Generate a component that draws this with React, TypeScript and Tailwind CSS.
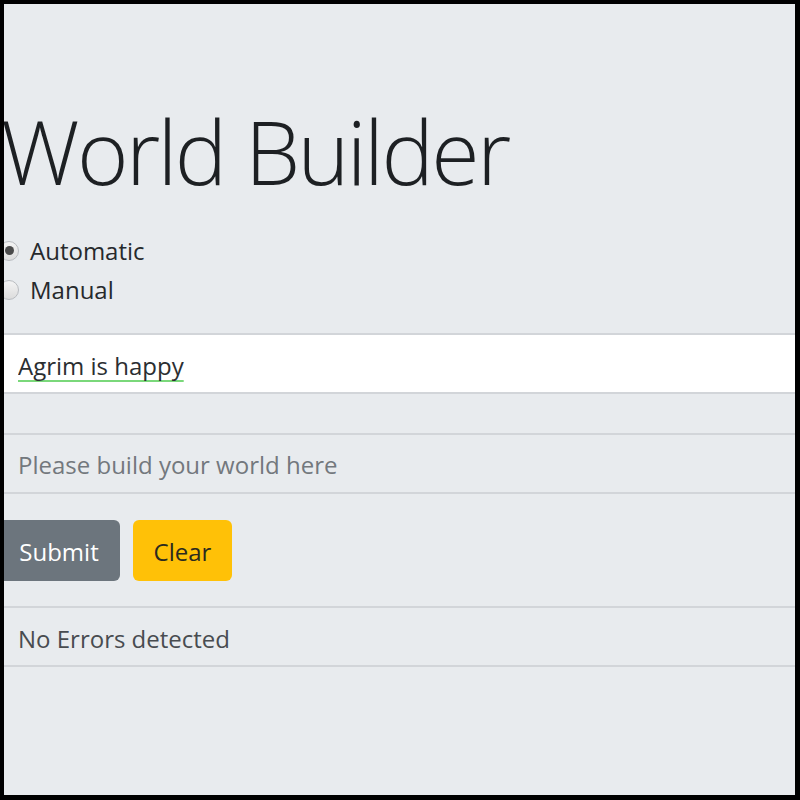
import { useState } from "react";

const font = { fontFamily: '"Open Sans", "Noto Sans", sans-serif' };

function Radio({ checked, label, onSelect }: { checked: boolean; label: string; onSelect: () => void }) {
  return (
    <label className="flex h-[39px] cursor-pointer items-center" onClick={onSelect}>
      <span className="-ml-[5px] flex h-[20px] w-[20px] shrink-0 items-center justify-center rounded-full border border-[#b9bcc0] bg-gradient-to-b from-[#f4f4f4] to-[#dcdcdc]">
        {checked ? <span className="h-[9px] w-[9px] rounded-full bg-[#4a4a4a]" /> : null}
      </span>
      <span className="ml-[11px] text-[24px] text-[#26292c]">{label}</span>
    </label>
  );
}

export default function App() {
  const [mode, setMode] = useState("auto");
  const [name, setName] = useState("Agrim is happy");
  const [world, setWorld] = useState("");

  return (
    <div className="h-[800px] w-[800px] bg-black pb-[5px] pl-[4px] pr-[5px] pt-[4px]" style={font}>
      <div className="flex h-full flex-col overflow-hidden bg-[#e8ebee]">
        <h1 className="-ml-[3px] mt-[103px] h-[112px] text-[88px] font-light leading-none tracking-[-2.6px] text-[#1d2023]">
          World Builder
        </h1>

        <div className="mt-[12px] flex flex-col">
          <Radio checked={mode === "auto"} label="Automatic" onSelect={() => setMode("auto")} />
          <Radio checked={mode === "manual"} label="Manual" onSelect={() => setMode("manual")} />
        </div>

        <div className="mt-[24px] border-t-2 border-[#d2d5d9]">
          <div className="flex h-[57px] items-center bg-white px-[14px] pt-[4px]">
            <input
              value={name}
              onChange={(e) => setName(e.target.value)}
              className="w-full bg-transparent text-[24px] text-[#2b2e31] underline decoration-[#7ad87a] decoration-[2px] underline-offset-[5px] outline-none [text-decoration-skip-ink:none]"
            />
          </div>
          <div className="h-[41px] border-t-2 border-[#d2d5d9]" />
          <div className="flex h-[61px] items-center border-y-2 border-[#d2d5d9] px-[14px] pt-[3px]">
            <input
              value={world}
              onChange={(e) => setWorld(e.target.value)}
              placeholder="Please build your world here"
              className="w-full bg-transparent text-[24px] text-[#2b2e31] outline-none placeholder:text-[#73787d]"
            />
          </div>
          <div className="flex h-[112px] items-center gap-[13px]">
            <button
              type="button"
              className="-ml-[6px] h-[61px] w-[122px] rounded-[6px] bg-[#6c757d] pt-[3px] text-[24px] text-white"
            >
              Submit
            </button>
            <button
              type="button"
              onClick={() => setWorld("")}
              className="h-[61px] w-[99px] rounded-[6px] bg-[#ffc107] pt-[3px] text-[24px] text-[#2b2a1f]"
            >
              Clear
            </button>
          </div>
          <div className="flex h-[61px] items-center border-y-2 border-[#d2d5d9] px-[14px] pt-[5px] text-[24px] text-[#484c50]">
            No Errors detected
          </div>
        </div>
      </div>
    </div>
  );
}
